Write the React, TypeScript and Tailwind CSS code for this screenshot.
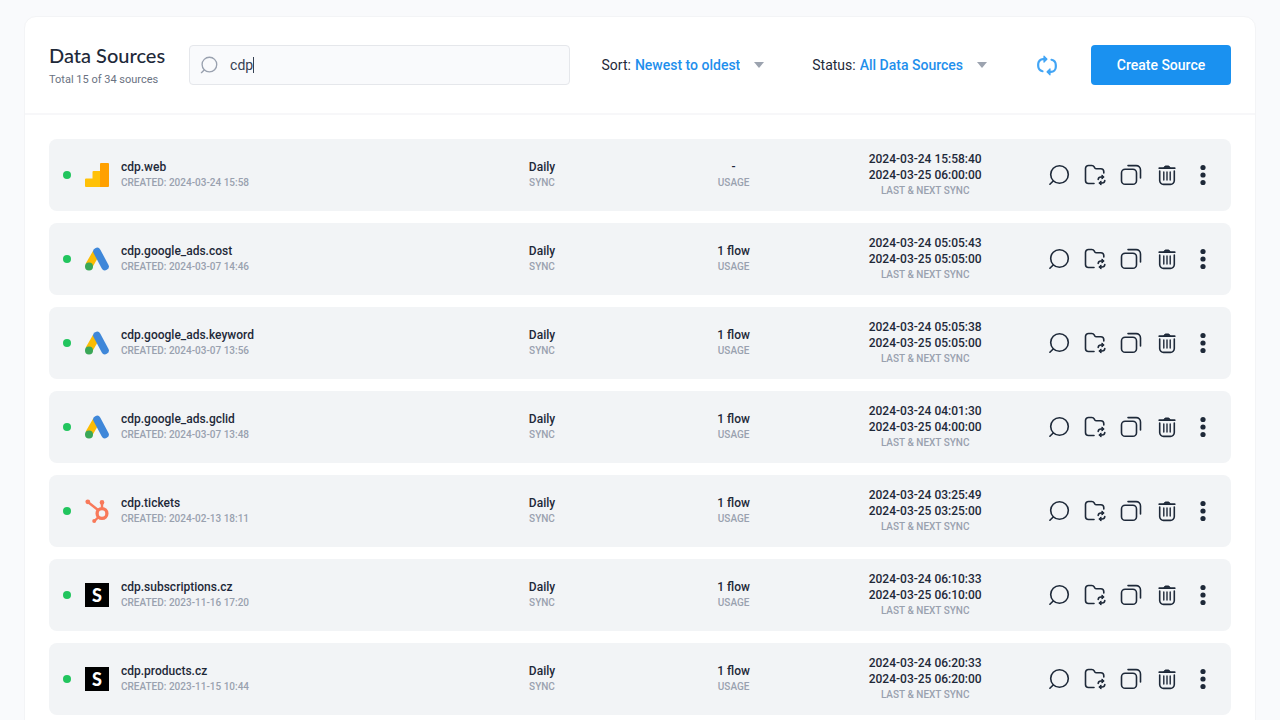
import { useState } from 'react'

type Logo = 'analytics' | 'ads' | 'hubspot' | 'shop'

type Source = {
  name: string
  created: string
  usage: string
  lastSync: string
  nextSync: string
  logo: Logo
}

const sources: Source[] = [
  { name: 'cdp.web', created: '2024-03-24 15:58', usage: '-', lastSync: '2024-03-24 15:58:40', nextSync: '2024-03-25 06:00:00', logo: 'analytics' },
  { name: 'cdp.google_ads.cost', created: '2024-03-07 14:46', usage: '1 flow', lastSync: '2024-03-24 05:05:43', nextSync: '2024-03-25 05:05:00', logo: 'ads' },
  { name: 'cdp.google_ads.keyword', created: '2024-03-07 13:56', usage: '1 flow', lastSync: '2024-03-24 05:05:38', nextSync: '2024-03-25 05:05:00', logo: 'ads' },
  { name: 'cdp.google_ads.gclid', created: '2024-03-07 13:48', usage: '1 flow', lastSync: '2024-03-24 04:01:30', nextSync: '2024-03-25 04:00:00', logo: 'ads' },
  { name: 'cdp.tickets', created: '2024-02-13 18:11', usage: '1 flow', lastSync: '2024-03-24 03:25:49', nextSync: '2024-03-25 03:25:00', logo: 'hubspot' },
  { name: 'cdp.subscriptions.cz', created: '2023-11-16 17:20', usage: '1 flow', lastSync: '2024-03-24 06:10:33', nextSync: '2024-03-25 06:10:00', logo: 'shop' },
  { name: 'cdp.products.cz', created: '2023-11-15 10:44', usage: '1 flow', lastSync: '2024-03-24 06:20:33', nextSync: '2024-03-25 06:20:00', logo: 'shop' },
]

const actions = ['Preview', 'Sync', 'Duplicate', 'Delete', 'More'] as const

function SourceLogo({ logo }: { logo: Logo }) {
  if (logo === 'analytics') {
    return (
      <svg viewBox="0 0 24 24" className="size-6 shrink-0" aria-hidden="true">
        <path d="M0 16.5a1 1 0 0 1 1-1h6.500V9a1 1 0 0 1 1-1H16v16H1a1 1 0 0 1-1-1z" fill="#ffc107" />
        <path d="M15 1a1 1 0 0 1 1-1h7a1 1 0 0 1 1 1v22a1 1 0 0 1-1 1h-8z" fill="#ffa000" />
      </svg>
    )
  }
  if (logo === 'ads') {
    return (
      <svg viewBox="0 0 24 24" className="size-6 shrink-0" aria-hidden="true">
        <path d="M11.5 5.5 4 18.5" stroke="#fbbc04" strokeWidth="7.6" />
        <path d="M12 4.500 20 19.500" stroke="#3f87d9" strokeWidth="7.6" strokeLinecap="round" />
        <circle cx="4" cy="19.500" r="4" fill="#3aa757" />
      </svg>
    )
  }
  if (logo === 'hubspot') {
    return (
      <svg viewBox="0 0 24 24" className="size-6 shrink-0" fill="none" stroke="#f8795a" aria-hidden="true">
        <circle cx="17" cy="14.500" r="4.900" strokeWidth="3.300" />
        <path d="M17 9.500V4M13 11 3.500 3.500M13.500 18l-4 4" strokeWidth="2.400" />
        <circle cx="17" cy="3.400" r="2.300" fill="#f8795a" stroke="none" />
        <circle cx="2.800" cy="2.800" r="2.400" fill="#f8795a" stroke="none" />
        <circle cx="9.200" cy="22" r="2" fill="#f8795a" stroke="none" />
      </svg>
    )
  }
  return (
    <span className="flex size-6 shrink-0 items-center justify-center bg-black font-[Lato,sans-serif] text-lg font-black text-white">
      S
    </span>
  )
}

function SearchIcon({ className }: { className: string }) {
  return (
    <svg viewBox="0 0 24 24" className={className} fill="none" stroke="currentColor" strokeWidth="1.6" strokeLinecap="round" aria-hidden="true">
      <circle cx="12.5" cy="11.5" r="8.8" />
      <path d="M6.200 18 2.900 21.200" />
    </svg>
  )
}

function ActionIcon({ name }: { name: (typeof actions)[number] }) {
  if (name === 'Preview') return <SearchIcon className="size-6" />

  if (name === 'More') {
    return (
      <svg viewBox="0 0 24 24" className="size-6" fill="currentColor" aria-hidden="true">
        <circle cx="12" cy="4.5" r="2.6" />
        <circle cx="12" cy="12" r="2.6" />
        <circle cx="12" cy="19.5" r="2.6" />
      </svg>
    )
  }

  return (
    <svg viewBox="0 0 24 24" className="size-6" fill="none" stroke="currentColor" strokeWidth="1.6" strokeLinecap="round" strokeLinejoin="round" aria-hidden="true">
      {name === 'Sync' && (
        <>
          <path d="M11 20.500H5.500a3 3 0 0 1-3-3v-12a3 3 0 0 1 3-3h3.300c1 0 1.900.5 2.400 1.400l.5.9c.4.7 1 1 1.800 1h4.300a3 3 0 0 1 3 3v1.200" />
          <path d="M15.200 16.500a2.700 2.700 0 0 1 2.700-2.500h2M21.800 17.500a2.700 2.700 0 0 1-2.700 2.500h-2" />
          <path d="m19.200 12.200 2 1.800-2 1.800zM17.800 18.200l-2 1.800 2 1.800z" fill="currentColor" strokeWidth="1" />
        </>
      )}
      {name === 'Duplicate' && (
        <>
          <rect x="2.5" y="6.300" width="15" height="15" rx="3.600" />
          <path d="M9 2.600h8.200a4.300 4.300 0 0 1 4.300 4.300V15" />
        </>
      )}
      {name === 'Delete' && (
        <>
          <path d="M4.700 8v9.600a3.800 3.800 0 0 0 3.800 3.800h7a3.800 3.800 0 0 0 3.800-3.800V8" />
          <path d="M4.300 5.200h15.400" strokeWidth="1.8" />
          <path d="M9 4.500c.3-1 .9-1.500 1.800-1.500h2.400c.9 0 1.500.5 1.800 1.500z" fill="currentColor" strokeWidth="1" />
          <path d="M8.800 9v8M12 9v8M15.200 9v8" strokeWidth="1.4" />
        </>
      )}
    </svg>
  )
}

function Filter({ id, label, options }: { id: string; label: string; options: string[] }) {
  return (
    <div className="flex items-center gap-1 text-sm">
      <label htmlFor={id} className="text-gray-800">{label}</label>
      <div className="relative flex items-center">
        <select id={id} className="field-sizing-content cursor-pointer appearance-none pr-6 font-medium text-[#1f8fec] outline-none">
          {options.map((option) => (
            <option key={option}>{option}</option>
          ))}
        </select>
        <svg viewBox="0 0 10 6" className="pointer-events-none absolute right-0 h-[6px] w-[10px]" fill="#9ca3af" aria-hidden="true">
          <path d="M0 0h10L5 6z" />
        </svg>
      </div>
    </div>
  )
}

function Stat({ values, label }: { values: string[]; label: string }) {
  return (
    <div className="text-center">
      {values.map((value) => (
        <p key={value} className="text-xs font-medium text-gray-800">{value}</p>
      ))}
      <p className="text-[10px] leading-4 font-medium text-gray-400">{label}</p>
    </div>
  )
}

function SourceRow({ source }: { source: Source }) {
  return (
    <li className="grid h-18 grid-cols-[2fr_1fr_1fr_1fr_auto] items-center rounded-lg bg-[#f2f4f6] pr-[10px] pl-[14px]">
      <div className="flex items-center">
        <span className="mr-[14px] size-2 shrink-0 rounded-full bg-[#22c55e]" />
        <SourceLogo logo={source.logo} />
        <div className="ml-3">
          <h2 className="text-xs font-medium text-gray-800">{source.name}</h2>
          <p className="text-[10px] leading-4 font-medium text-gray-400">CREATED: {source.created}</p>
        </div>
      </div>
      <Stat values={['Daily']} label="SYNC" />
      <Stat values={[source.usage]} label="USAGE" />
      <Stat values={[source.lastSync, source.nextSync]} label="LAST & NEXT SYNC" />
      <div className="flex pl-5 text-gray-800">
        {actions.map((action) => (
          <button key={action} type="button" aria-label={action} className="flex size-9 items-center justify-center">
            <ActionIcon name={action} />
          </button>
        ))}
      </div>
    </li>
  )
}

export default function App() {
  const [query, setQuery] = useState('cdp')

  return (
    <div className="h-screen overflow-hidden bg-[#f9fafc] px-6 pt-4 font-[Roboto,sans-serif]">
      <main className="rounded-xl border border-gray-100 bg-white">
        <header className="flex h-[98px] items-center border-b-2 border-gray-100/70 px-6">
          <div className="mr-6">
            <h1 className="font-[Lato,sans-serif] text-xl leading-7 font-medium whitespace-nowrap text-gray-800">Data Sources</h1>
            <p className="mt-px text-[11px] leading-5 text-gray-500">Total 15 of 34 sources</p>
          </div>

          <div className="relative mr-8 flex flex-1 items-center">
            <SearchIcon className="pointer-events-none absolute left-[10px] size-5 text-gray-400" />
            <input
              type="text"
              aria-label="Search sources"
              value={query}
              onChange={(e) => setQuery(e.target.value)}
              className="peer h-10 w-full rounded border border-gray-200 bg-[#f9fafc] pl-10 text-sm text-gray-700 outline-none"
            />
            {/* Resting caret, replaced by the native one on focus */}
            <span className="absolute left-16 h-4 w-px bg-gray-700 peer-focus:hidden" />
          </div>

          <div className="mr-12">
            <Filter id="sort" label="Sort:" options={['Newest to oldest', 'Oldest to newest']} />
          </div>
          <div className="mr-12">
            <Filter id="status" label="Status:" options={['All Data Sources', 'Active', 'Paused']} />
          </div>

          <button type="button" aria-label="Refresh" className="mr-8 text-[#42a5f5]">
            <svg viewBox="0 0 24 24" className="size-6" fill="none" stroke="currentColor" strokeWidth="2.2" strokeLinecap="round" strokeLinejoin="round" aria-hidden="true">
              <path d="M7.500 18.200A5.500 5.500 0 0 1 3.200 13v-2a4.800 4.800 0 0 1 4.800-4.800h3" />
              <path d="M16.500 6.800A5.500 5.500 0 0 1 20.800 12v2a4.800 4.800 0 0 1-4.800 4.800h-3" />
              <path d="M9 3.200 12 6.200 9 9.200zM15 15.800l-3 3 3 3z" fill="currentColor" strokeWidth="1.2" />
            </svg>
          </button>
          <button type="button" className="h-10 w-35 rounded bg-[#1a91f0] text-sm font-medium text-white">
            Create Source
          </button>
        </header>

        <ul className="flex flex-col gap-3 p-6">
          {sources.map((source) => (
            <SourceRow key={source.name} source={source} />
          ))}
        </ul>
      </main>
    </div>
  )
}
